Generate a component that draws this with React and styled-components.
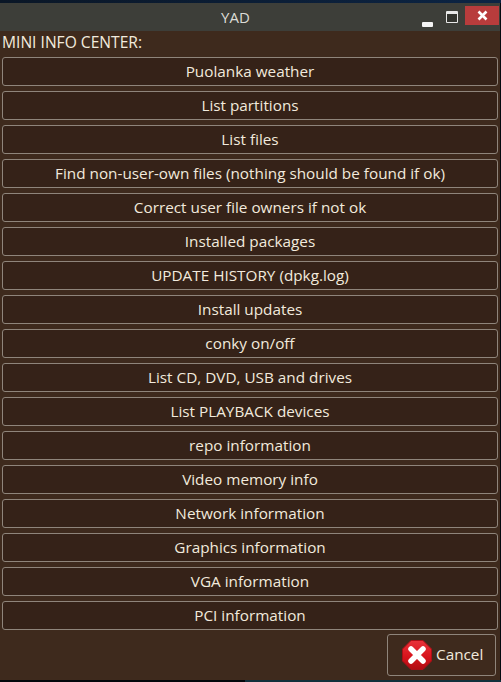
import React from 'react'
import styled, { createGlobalStyle } from 'styled-components'

const items = [
  'Puolanka weather',
  'List partitions',
  'List files',
  'Find non-user-own files (nothing should be found if ok)',
  'Correct user file owners if not ok',
  'Installed packages',
  'UPDATE HISTORY (dpkg.log)',
  'Install updates',
  'conky on/off',
  'List CD, DVD, USB and drives',
  'List PLAYBACK devices',
  'repo information',
  'Video memory info',
  'Network information',
  'Graphics information',
  'VGA information',
  'PCI information',
]

function App() {
  return (
    <Desktop>
      <GlobalStyle />
      <Win>
        <TitleBar>
          <Title>YAD</Title>
          <WinControls>
            <MinButton />
            <MaxButton />
            <CloseButton>
              <svg width="11" height="11" viewBox="0 0 11 11">
                <path d="M1.5 1.5L9.5 9.5M9.5 1.5L1.5 9.5" stroke="#fff" strokeWidth="2.6" />
              </svg>
            </CloseButton>
          </WinControls>
        </TitleBar>
        <Body>
          <Heading>MINI INFO CENTER:</Heading>
          <List>
            {items.map(label => (
              <ItemButton key={label}>{label}</ItemButton>
            ))}
          </List>
          <Footer>
            <CancelButton>
              <svg width="30" height="30" viewBox="0 0 30 30">
                <defs>
                  <linearGradient id="stopRed" x1="0" y1="0" x2="0" y2="1">
                    <stop offset="0" stopColor="#e8323a" />
                    <stop offset="0.55" stopColor="#d8141c" />
                    <stop offset="1" stopColor="#b00c12" />
                  </linearGradient>
                </defs>
                <polygon
                  points="9,0.5 21,0.5 29.5,9 29.5,21 21,29.5 9,29.5 0.5,21 0.5,9"
                  fill="url(#stopRed)"
                  stroke="#a80f16"
                />
                <path d="M9 9L21 21M21 9L9 21" stroke="#fff" strokeWidth="5.5" strokeLinecap="round" />
              </svg>
              <CancelLabel>Cancel</CancelLabel>
            </CancelButton>
          </Footer>
        </Body>
      </Win>
    </Desktop>
  )
}

export default App

const GlobalStyle = createGlobalStyle`
  html, body {
    margin: 0;
    padding: 0;
    background: #050a10;
  }
`

const Desktop = styled.div`
  width: 501px;
  height: 682px;
  padding: 3px 1px 2px 0;
  box-sizing: border-box;
  overflow: hidden;
  font-family: "Open Sans", "Noto Sans", sans-serif;
  background:
    linear-gradient(90deg, #03080c 0 245px, #12303c 245px 100%) bottom / 100% 2px no-repeat,
    linear-gradient(90deg, #0a1626, #0c2444) top / 100% 3px no-repeat,
    #050a10;
`

const Win = styled.div`
  height: 100%;
  display: flex;
  flex-direction: column;
`

const TitleBar = styled.div`
  height: 28px;
  flex: none;
  display: flex;
  align-items: center;
  justify-content: center;
  position: relative;
  padding-right: 29px;
  background: #3d3e39;
`

const Title = styled.div`
  color: #dcdcd6;
  font-size: 15px;
`

const WinControls = styled.div`
  position: absolute;
  top: 3px;
  right: 1px;
  display: flex;
  align-items: flex-start;
`

const MinButton = styled.div`
  width: 11px;
  height: 5px;
  margin: 16px 13px 0 0;
  border-radius: 1px;
  background: #f4f4f4;
`

const MaxButton = styled.div`
  width: 12px;
  height: 12px;
  box-sizing: border-box;
  margin: 5px 7px 0 0;
  border: 1px solid #e8e8e8;
  border-top-width: 3px;
  border-radius: 1px;
  background: #33342f;
`

const CloseButton = styled.div`
  width: 34px;
  height: 19px;
  display: flex;
  align-items: center;
  justify-content: center;
  background: #b83c3c;
`

const Body = styled.div`
  flex: 1;
  display: flex;
  flex-direction: column;
  background: #3e2a1d;
`

const Heading = styled.div`
  height: 26px;
  padding-left: 2px;
  line-height: 23px;
  color: #f2eadd;
  font-size: 15.6px;
  white-space: nowrap;
`

const List = styled.div`
  display: flex;
  flex-direction: column;
  gap: 5px;
  padding: 0 2px;
`

const ItemButton = styled.div`
  height: 29px;
  display: flex;
  align-items: center;
  justify-content: center;
  box-sizing: border-box;
  padding-bottom: 2px;
  border: 1px solid #8f857b;
  border-radius: 3px;
  background: #352218;
  color: #f2eadd;
  font-size: 15.3px;
  white-space: nowrap;
`

const Footer = styled.div`
  display: flex;
  justify-content: flex-end;
  padding: 4px 4px 0 0;
`

const CancelButton = styled.div`
  width: 109px;
  height: 42px;
  display: flex;
  align-items: center;
  gap: 4px;
  box-sizing: border-box;
  padding-left: 14px;
  border: 1px solid #8f857b;
  border-radius: 3px;
  color: #f2eadd;
  font-size: 15.3px;
`

const CancelLabel = styled.span`
  margin-bottom: 2px;
`
